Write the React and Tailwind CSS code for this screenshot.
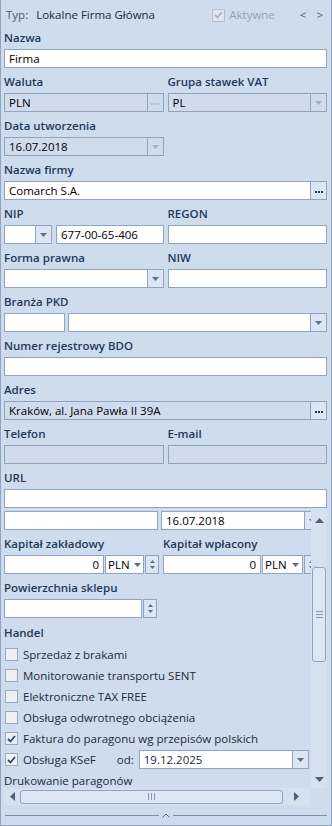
const LABEL = "text-[#1e395b] font-semibold leading-[16px] pt-[6px] pb-[3px] whitespace-nowrap";

const Down = ({ light }) => (
  <svg width="7" height="4" viewBox="0 0 7 4">
    <path d="M0 0h7L3.5 4z" fill={light ? "#a3b0c2" : "#5f6f86"} />
  </svg>
);

const DropBtn = ({ light }) => (
  <div className={`w-[16px] shrink-0 border-l border-[#8ea4c1] flex items-center justify-center ${light ? "" : "bg-[#dce6f3]"}`}>
    <Down light={light} />
  </div>
);

const DotsBtn = ({ light }) => (
  <div className={`w-[16px] shrink-0 border-l border-[#8ea4c1] flex items-center justify-center gap-[1px] pt-[3px] ${light ? "" : "bg-[#dce6f3]"}`}>
    {[0, 1, 2].map((i) => (
      <div key={i} className={`w-[2px] h-[2px] ${light ? "bg-[#b0bccc]" : "bg-[#1e395b]"}`} />
    ))}
  </div>
);

const SpinBtn = () => (
  <div className="w-[14px] shrink-0 h-[19px] border border-[#8ea4c1] bg-[#dce6f3] flex flex-col items-center justify-center gap-[3px]">
    <svg width="5" height="3" viewBox="0 0 5 3"><path d="M0 3h5L2.5 0z" fill="#5f6f86" /></svg>
    <svg width="5" height="3" viewBox="0 0 5 3"><path d="M0 0h5L2.5 3z" fill="#5f6f86" /></svg>
  </div>
);

const Field = ({ value, disabled, right, tight, className = "", children }) => (
  <div className={`h-[19px] border border-[#8ea4c1] flex ${disabled ? "bg-[#d0dcee]" : "bg-white"} ${className}`}>
    <div className={`flex-1 min-w-0 ${tight ? "px-[2px]" : "px-[4px]"} leading-[17px] whitespace-nowrap overflow-hidden ${right ? "text-right" : ""}`}>{value}</div>
    {children}
  </div>
);

const Check = ({ checked, disabled }) => (
  <div className={`w-[13px] h-[13px] shrink-0 border flex items-center justify-center ${disabled ? "border-[#b3bfcf] bg-[#dfe6f0]" : "border-[#9aa8ba] bg-[#eceff4]"}`}>
    {checked && (
      <svg width="9" height="8" viewBox="0 0 9 8">
        <path d="M1 4l2.5 2.5L8 1" stroke={disabled ? "#a6b2c3" : "#2b4a78"} strokeWidth="1.8" fill="none" />
      </svg>
    )}
  </div>
);

const CheckRow = ({ label, checked }) => (
  <div className="h-[21px] flex items-center gap-[5px] pl-[1px] text-[#1d2a3c] whitespace-nowrap">
    <Check checked={checked} />
    <span>{label}</span>
  </div>
);

const handel = [
  ["Sprzedaż z brakami", false],
  ["Monitorowanie transportu SENT", false],
  ["Elektroniczne TAX FREE", false],
  ["Obsługa odwrotnego obciążenia", false],
  ["Faktura do paragonu wg przepisów polskich", true],
];

export default function App() {
  return (
    <div className="w-[332px] h-[826px] bg-[#cfdcee] border-x border-b border-[#8ea4c1] flex flex-col font-['Open_Sans',sans-serif] text-[11.5px] text-black overflow-hidden">
      <div className="pl-[3px] pr-[4px]">
        {/* header */}
        <div className="h-[24px] flex items-center pt-[6px]">
          <span className="text-[#4b5c73] ml-[2px]">Typ:</span>
          <span className="ml-[8px] text-[#1d2a3c]">Lokalne Firma Główna</span>
          <div className="ml-auto flex items-center gap-[4px] text-[#94a2b6]">
            <Check checked disabled />
            <span>Aktywne</span>
          </div>
          <span className="ml-[25px] text-[#4b5c73]">&lt;</span>
          <span className="ml-[10px] mr-[4px] text-[#4b5c73]">&gt;</span>
        </div>

        <div className={LABEL}>Nazwa</div>
        <Field value="Firma" />

        <div className="grid grid-cols-2 gap-x-[4px]">
          <div>
            <div className={LABEL}>Waluta</div>
            <Field value="PLN" disabled><DotsBtn light /></Field>
          </div>
          <div>
            <div className={LABEL}>Grupa stawek VAT</div>
            <Field value="PL" disabled><DropBtn light /></Field>
          </div>
          <div>
            <div className={LABEL}>Data utworzenia</div>
            <Field value="16.07.2018" disabled><DropBtn light /></Field>
          </div>
          <div />
        </div>

        <div className={LABEL}>Nazwa firmy</div>
        <Field value="Comarch S.A."><DotsBtn /></Field>

        <div className="grid grid-cols-2 gap-x-[4px]">
          <div>
            <div className={LABEL}>NIP</div>
            <div className="flex gap-[4px]">
              <Field className="w-[48px] shrink-0"><DropBtn /></Field>
              <Field className="flex-1" value="677-00-65-406" />
            </div>
          </div>
          <div>
            <div className={LABEL}>REGON</div>
            <Field />
          </div>
          <div>
            <div className={LABEL}>Forma prawna</div>
            <Field><DropBtn /></Field>
          </div>
          <div>
            <div className={LABEL}>NIW</div>
            <Field />
          </div>
        </div>

        <div className={LABEL}>Branża PKD</div>
        <div className="flex gap-[3px]">
          <Field className="w-[61px] shrink-0" />
          <Field className="flex-1"><DropBtn /></Field>
        </div>

        <div className={LABEL}>Numer rejestrowy BDO</div>
        <Field />

        <div className={LABEL}>Adres</div>
        <Field value="Kraków, al. Jana Pawła II 39A" disabled><DotsBtn /></Field>

        <div className="grid grid-cols-2 gap-x-[4px]">
          <div>
            <div className={LABEL}>Telefon</div>
            <Field disabled />
          </div>
          <div>
            <div className={LABEL}>E-mail</div>
            <Field disabled />
          </div>
        </div>

        <div className={LABEL}>URL</div>
        <Field />
      </div>

      {/* scroll area */}
      <div className="flex-1 min-h-0 flex pl-[3px] pr-[4px]">
        <div className="flex-1 min-w-0 overflow-hidden">
          <div className="w-[322px] pt-[3px]">
            <div className="flex gap-[3px]">
              <Field className="w-[154px] shrink-0" />
              <Field className="w-[160px] shrink-0" value="16.07.2018"><DropBtn /></Field>
            </div>

            <div className="flex gap-[6px]">
              <div className="w-[153px] shrink-0">
                <div className={LABEL}>Kapitał zakładowy</div>
                <div className="flex gap-[1px]">
                  <Field className="w-[100px] shrink-0" value="0" right />
                  <Field className="w-[39px] shrink-0" value="PLN" tight><div className="w-[12px] flex items-center justify-center"><Down /></div></Field>
                  <SpinBtn />
                </div>
              </div>
              <div className="w-[155px] shrink-0">
                <div className={LABEL}>Kapitał wpłacony</div>
                <div className="flex gap-[1px]">
                  <Field className="w-[98px] shrink-0" value="0" right />
                  <Field className="w-[41px] shrink-0" value="PLN" tight><div className="w-[13px] flex items-center justify-center"><Down /></div></Field>
                  <SpinBtn />
                </div>
              </div>
            </div>

            <div className={LABEL}>Powierzchnia sklepu</div>
            <div className="flex gap-[1px] w-[153px]">
              <Field className="flex-1" />
              <SpinBtn />
            </div>

            <div className="text-[#1e395b] font-semibold leading-[16px] pt-[7px] pb-[3px]">Handel</div>
            {handel.map(([l, c]) => (
              <CheckRow key={l} label={l} checked={c} />
            ))}
            <div className="h-[21px] flex items-center pl-[1px] text-[#1d2a3c] whitespace-nowrap">
              <Check checked />
              <span className="ml-[5px]">Obsługa KSeF</span>
              <span className="ml-[21px]">od:</span>
              <Field className="ml-[5px] w-[170px] shrink-0" value="19.12.2025"><DropBtn /></Field>
            </div>
            <div className="h-[21px] flex items-center text-[#1d2a3c] whitespace-nowrap">Drukowanie paragonów</div>
          </div>
        </div>

        {/* vertical scrollbar */}
        <div className="w-[16px] shrink-0 bg-[#d6e1f0] flex flex-col items-center">
          <div className="h-[20px] flex items-center justify-center pt-[4px]">
            <svg width="9" height="5" viewBox="0 0 9 5"><path d="M0 5h9L4.5 0z" fill="#4e5f78" /></svg>
          </div>
          <div className="h-[39px]" />
          <div className="w-[14px] h-[95px] rounded-[3px] border border-[#8ea4c1] bg-[#dde7f4] flex flex-col items-center justify-center gap-[2px]">
            <div className="w-[7px] h-px bg-[#8a99ae]" />
            <div className="w-[7px] h-px bg-[#8a99ae]" />
            <div className="w-[7px] h-px bg-[#8a99ae]" />
          </div>
          <div className="flex-1" />
          <div className="h-[16px] flex items-center justify-center pb-[2px]">
            <svg width="9" height="5" viewBox="0 0 9 5"><path d="M0 0h9L4.5 5z" fill="#4e5f78" /></svg>
          </div>
        </div>
      </div>

      {/* horizontal scrollbar */}
      <div className="h-[17px] flex pl-[3px] pr-[4px]">
        <div className="w-[306px] bg-[#d6e1f0] flex items-center">
          <div className="w-[16px] flex items-center justify-center">
            <svg width="5" height="9" viewBox="0 0 5 9"><path d="M5 0v9L0 4.5z" fill="#4e5f78" /></svg>
          </div>
          <div className="w-[263px] h-[14px] rounded-[3px] border border-[#8ea4c1] bg-[#dde7f4] flex items-center justify-center gap-[2px]">
            <div className="w-px h-[7px] bg-[#8a99ae]" />
            <div className="w-px h-[7px] bg-[#8a99ae]" />
            <div className="w-px h-[7px] bg-[#8a99ae]" />
          </div>
          <div className="flex-1 flex items-center justify-center">
            <svg width="5" height="9" viewBox="0 0 5 9"><path d="M0 0v9L5 4.5z" fill="#4e5f78" /></svg>
          </div>
        </div>
      </div>

      {/* bottom splitter */}
      <div className="h-[20px] flex items-center px-[4px] gap-[3px]">
        <div className="flex-1 h-px bg-[#7d8ca2]" />
        <svg width="8" height="5" viewBox="0 0 8 5"><path d="M0.5 4.5L4 1l3.5 3.5" stroke="#5f6f86" fill="none" /></svg>
        <div className="flex-1 h-px bg-[#7d8ca2]" />
      </div>
    </div>
  );
}
